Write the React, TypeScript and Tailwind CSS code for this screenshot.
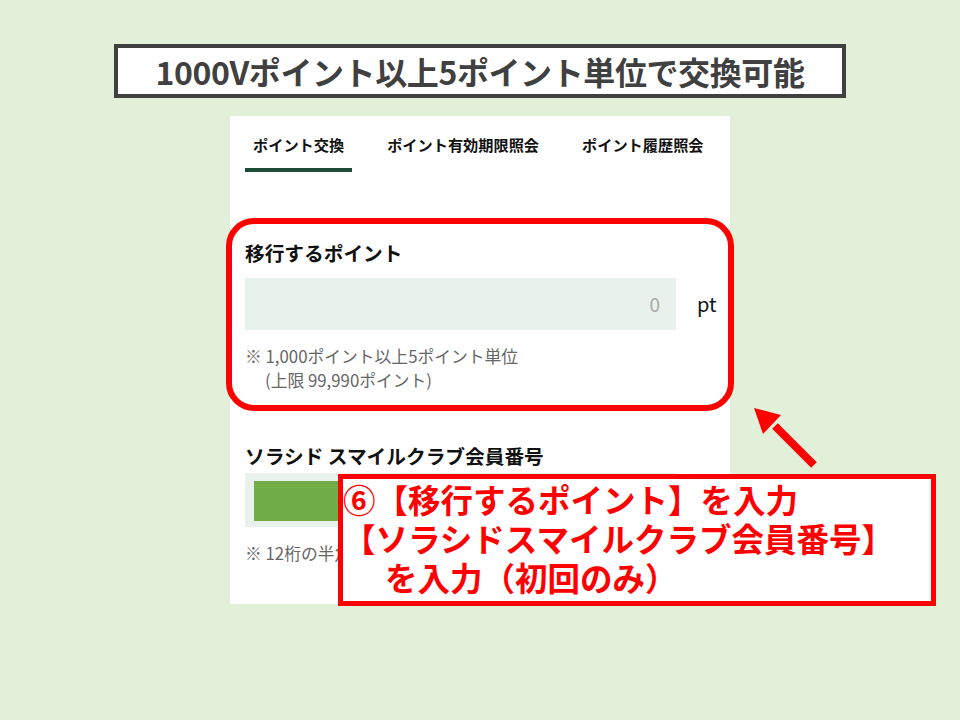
import React from 'react';

const font = { fontFamily: '"Noto Sans CJK JP", "Noto Sans", sans-serif' };

const tabs = ['ポイント交換', 'ポイント有効期限照会', 'ポイント履歴照会'];

const App = () => {
  return (
    <div className="relative w-[960px] h-[720px] overflow-hidden bg-[#e2efd9]" style={font}>
      {/* Title */}
      <div className="pt-[44px] pl-[114px]">
        <div className="w-[732px] h-[54px] border-4 border-[#404040] bg-white flex items-center justify-center">
          <span className="text-[32px] font-bold text-[#404040] tracking-[-0.4px] leading-none">
            1000Vポイント以上5ポイント単位で交換可能
          </span>
        </div>
      </div>

      {/* Panel */}
      <div className="ml-[230px] mt-[18px] w-[500px] h-[488px] bg-white pl-[15px]">
        <div className="flex gap-[27px]">
          {tabs.map((tab, i) => (
            <div
              key={i}
              className={`px-2 pt-[18px] pb-[14px] border-b-4 text-[15.2px] leading-[20px] font-bold text-[#111] ${
                i === 0 ? 'border-[#1d4d35]' : 'border-transparent'
              }`}
            >
              {tab}
            </div>
          ))}
        </div>

        <div className="mt-[67px] text-[19.7px] leading-[28px] font-bold text-[#111]">移行するポイント</div>
        <div className="mt-[11px] flex items-center">
          <div className="w-[431px] h-[52px] bg-[#e8f1ec] flex items-center justify-end pr-[16px] text-[19px] text-[#aaa]">
            0
          </div>
          <span className="ml-[21px] text-[20px] text-[#111]">pt</span>
        </div>
        <div className="mt-[14px] text-[16.8px] leading-[24px] text-[#666]">
          <div>※ 1,000ポイント以上5ポイント単位</div>
          <div className="pl-[20px]">(上限 99,990ポイント)</div>
        </div>

        <div className="mt-[50px] text-[19.7px] leading-[28px] font-bold text-[#111]">ソラシド スマイルクラブ会員番号</div>
        <div className="mt-[3px] w-[431px] h-[54px] bg-[#e8f1ec] pl-[9px] pt-[8px]">
          <div className="w-[87px] h-[40px] bg-[#70ad47]" />
        </div>
        <div className="mt-[14px] text-[16.8px] leading-[24px] text-[#666]">※ 12桁の半角数字で入力してください</div>
      </div>

      {/* Highlight box */}
      <div className="absolute left-[226px] top-[218px] w-[508px] h-[193px] border-[6px] border-[#ff0000] rounded-[28px]" />

      {/* Arrow */}
      <svg className="absolute left-[740px] top-[400px]" width="90" height="75" viewBox="740 400 90 75">
        <line x1="775" y1="426" x2="814" y2="465" stroke="#ff0000" strokeWidth="8" />
        <polygon points="754,408 781,415 763,434" fill="#ff0000" />
      </svg>

      {/* Callout */}
      <div className="absolute left-[338px] top-[474px] w-[598px] h-[132px] border-[5px] border-[#ff0000] bg-white text-[32.5px] leading-[39px] font-bold text-[#ff0000]">
        <div>⑥【移行するポイント】を入力</div>
        <div>【ソラシドスマイルクラブ会員番号】</div>
        <div className="pl-[42px]">を入力（初回のみ）</div>
      </div>
    </div>
  );
};

export default App;
